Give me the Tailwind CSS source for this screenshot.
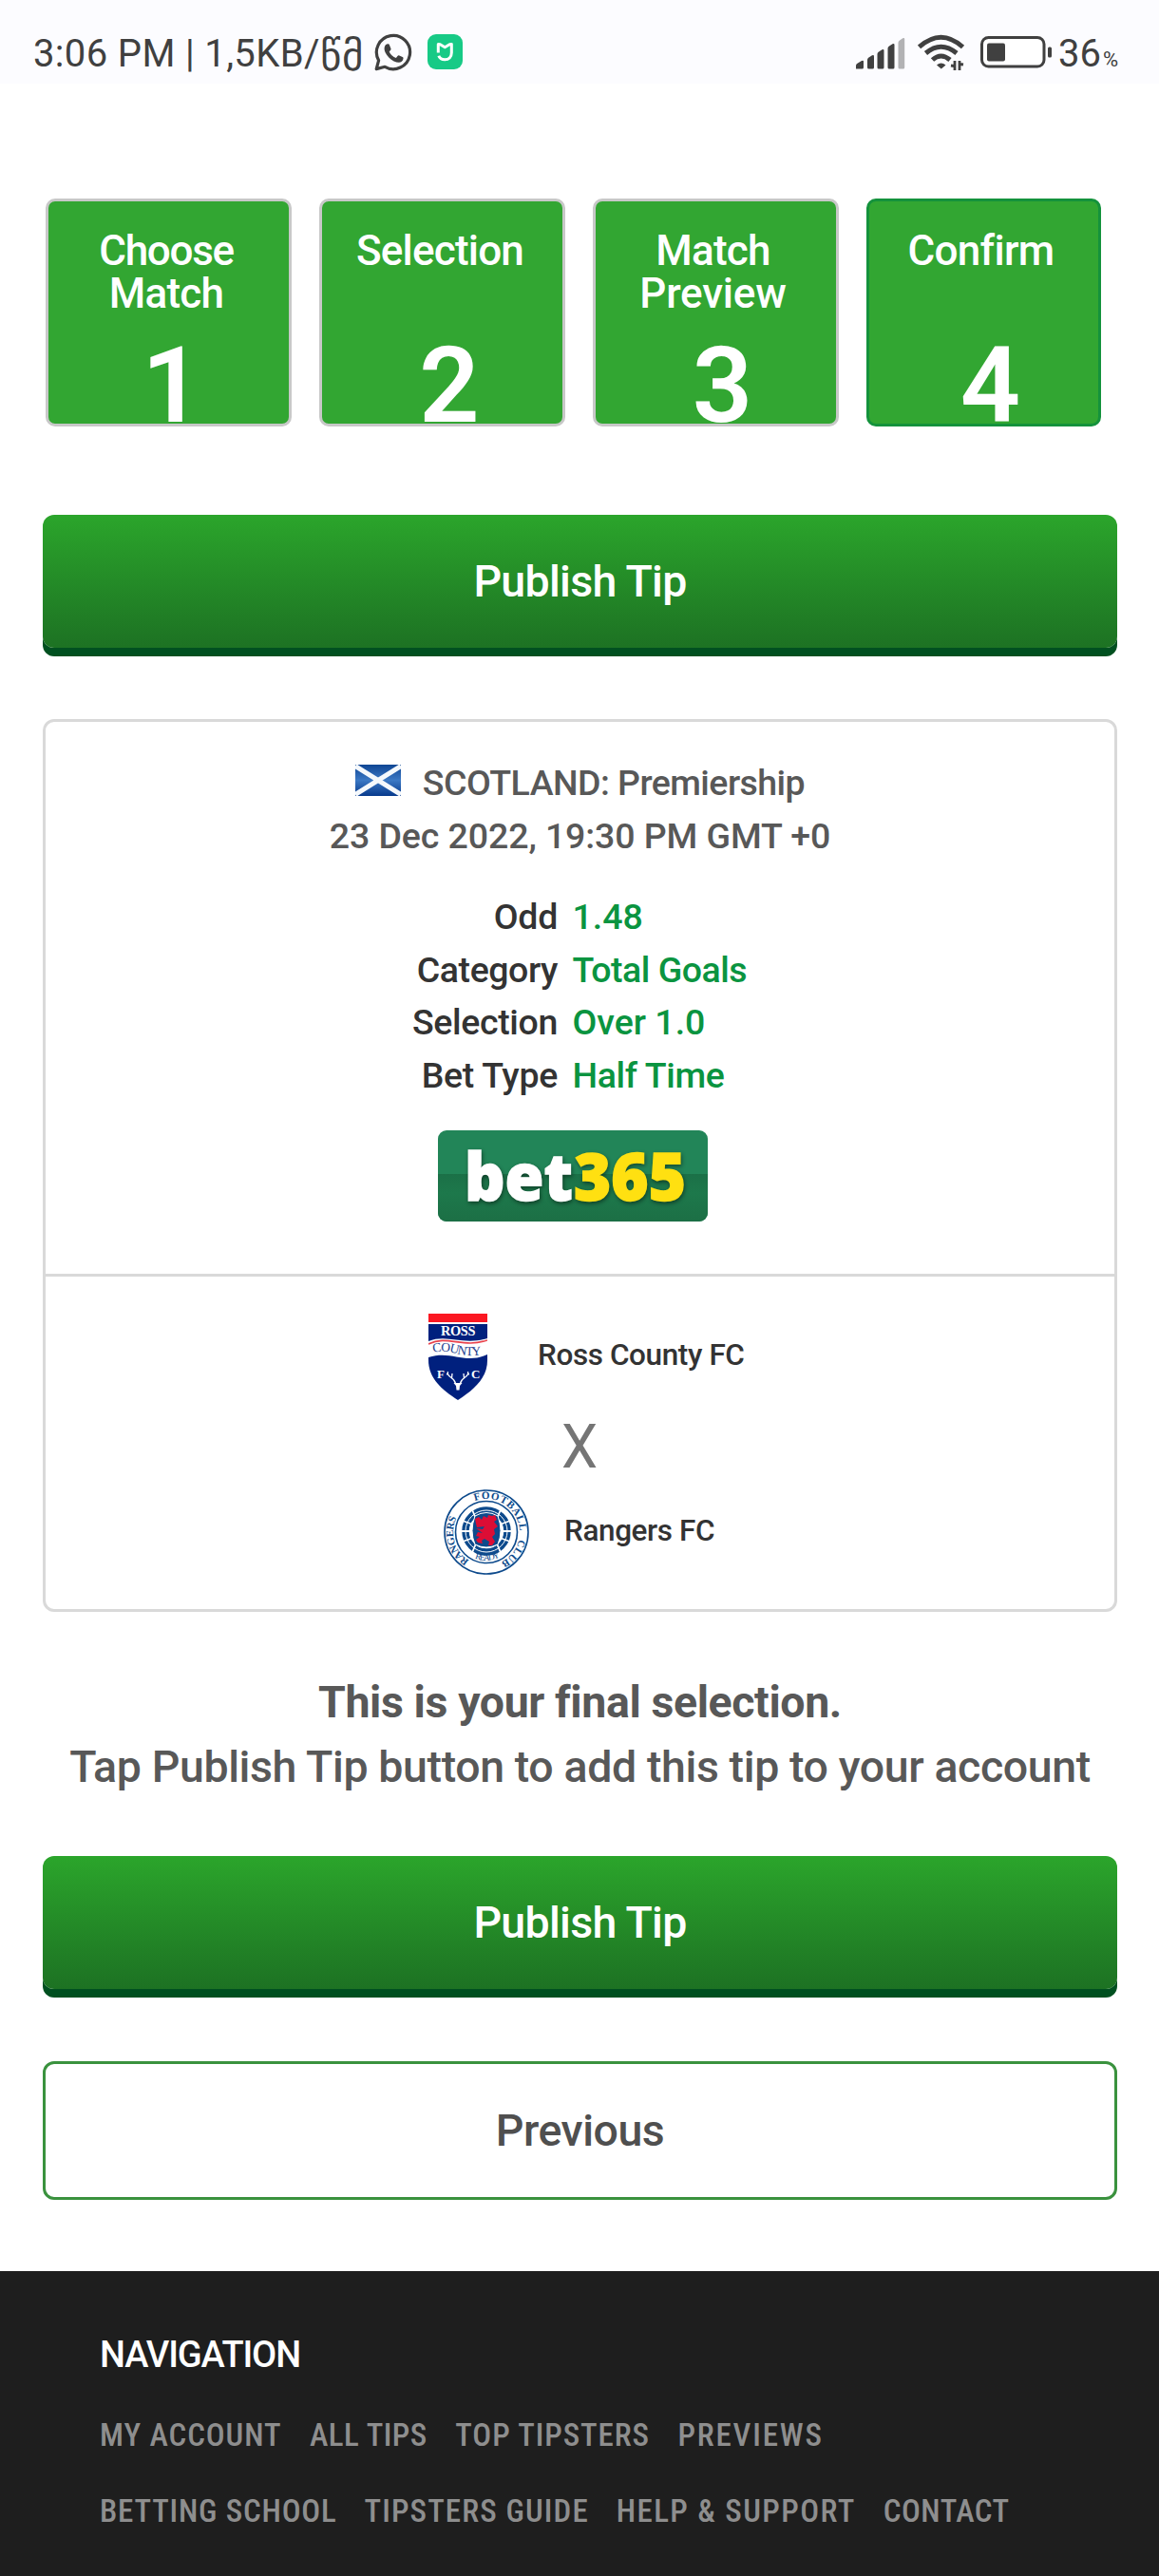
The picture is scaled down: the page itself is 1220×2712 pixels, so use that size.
<!DOCTYPE html>
<html lang="en">
  <head>
    <meta charset="UTF-8" />
    <meta name="viewport" content="width=device-width, initial-scale=1.0" />
    <script src="https://cdn.jsdelivr.net/npm/@tailwindcss/browser@4"></script>
    <title>Publish Tip</title>
  </head>
  <body class="min-h-screen flex flex-col bg-white font-['Roboto',sans-serif] font-medium text-[#585858] whitespace-nowrap overflow-x-hidden">
    <!-- Status bar -->
    <header class="h-[88px] shrink-0 bg-[#fcfcff] text-[#404040] font-normal flex items-start justify-between pl-[35px] pr-[43px]">
      <div class="flex items-start">
        <div class="flex text-[40px] leading-[60px] pt-[27px] w-[359px]">
          <span class="tracking-[0.350px]">3:06 PM | 1,5KB/</span>
          <span class="text-[43px] mt-0.5 tracking-[1px]">წმ</span>
        </div>
        <svg class="w-[40px] h-[40px] mt-[34.5px]" viewBox="0 0 40 40">
          <path d="M2.2 37.6 L4.6 28.6 A17.6 17.6 0 1 1 11.2 35.3 Z" fill="none" stroke="#404040" stroke-width="3.2" stroke-linejoin="round" />
          <path d="M10.8 14.5c.6-2 2-3.2 3.4-3.2 1 0 1.400.2 1.800 1.200l1.400 3.400c.3.8.1 1.200-.3 1.800l-1.400 1.700c1.600 3.200 4 5.200 7.200 6.600l1.800-2.200c.5-.6.9-.7 1.600-.4l3.400 1.700c.8.4.9.8.8 1.600-.3 2.400-2.500 4-4.600 4-3 0-7.500-2-10.600-5.300-3.200-3.300-5.400-7.600-4.500-10.900z" fill="#404040" />
        </svg>
        <svg class="w-[37px] h-[37px] mt-9 ml-4" viewBox="0 0 37 37">
          <rect width="37" height="37" rx="9" fill="#17ca86" />
          <path d="M11.300 19.500V10.500l2 .2 5 3 5-3 2-.2v9c0 4.500-3 7.300-7 7.300-3.400 0-5.600-1.500-6.500-4" fill="none" stroke="#fff" stroke-width="3" stroke-linejoin="round" />
        </svg>
      </div>
      <div class="flex items-start">
        <svg class="w-[52px] h-[34px] mt-[38.500px]" viewBox="0 0 52 34" fill="#404040">
          <path d="M0 33.500v-3.500q0-1.500 1.500-2.300l4.500-2.700q2-1 2 .8V32q0 1.500-1.500 1.500z" />
          <path d="M12 32v-8q0-1.500 1.200-2.300l3.800-2.500q2-.8 2 1V32q0 1.500-1.500 1.500h-4q-1.500 0-1.500-1.500z" />
          <path d="M22.500 32V18q0-1.500 1.200-2.200l3.800-2.500q2-.8 2 1V32q0 1.500-1.500 1.500h-4q-1.500 0-1.500-1.500z" />
          <path d="M33.500 32V12q0-1.500 1.200-2.200l3.800-2.500q2-.8 2 1V32q0 1.500-1.500 1.500h-4q-1.500 0-1.500-1.500z" />
          <path d="M44.500 32V6q0-1.500 1.200-2.200l3.500-2.500q2-.8 2 1V32q0 1.500-1.500 1.500h-3.700q-1.500 0-1.500-1.500z" fill="#b2b2b4" />
        </svg>
        <svg class="w-[50px] h-[40px] mt-[36px] ml-[13px]" viewBox="0 0 50 40" fill="none" stroke="#404040" stroke-width="5">
          <path d="M1.500 13.500Q24.500-7 47.500 13.500" />
          <path d="M8.500 20Q24.500 6.500 41 20" />
          <path d="M15.500 27Q24.500 19 34 27" />
          <path d="M20 32.500q4.500-4 9.500 0l-4.700 4z" fill="#404040" stroke="none" />
          <path d="M39 28v10M38 33.500l-3-.5M44 38V28M45 31.500l3 .5" stroke-width="2.800" />
        </svg>
        <svg class="w-[76px] h-[34px] mt-[37.500px] ml-[16px]" viewBox="0 0 76 34">
          <rect x="1.500" y="1.500" width="65.500" height="30.500" rx="7" fill="#fff" stroke="#404040" stroke-width="3" />
          <rect x="7" y="7.500" width="19" height="19" rx="2" fill="#404040" />
          <rect x="71" y="11.500" width="4" height="11" rx="1.500" fill="#404040" />
        </svg>
        <div class="text-[40px] leading-[60px] pt-[27px] ml-[6px]">36<span class="text-[22px] ml-0.5">%</span></div>
      </div>
    </header>

    <!-- Steps -->
    <section class="flex gap-[29px] mt-[121px] pl-12 text-white text-center">
      <div class="w-[259px] h-[240px] shrink-0 rounded-[10px] border-3 border-[#c8c8c8] bg-[#32a632] overflow-hidden pt-[30px] pr-[5px]">
        <div class="h-[90px] text-[44px] leading-[45px]"><span class="tracking-[-1.3px]">Choose</span><br /><span class="tracking-[-0.8px]">Match</span></div>
        <div class="mt-[18px] pl-3 text-[111px] leading-[113px] font-semibold">1</div>
      </div>
      <div class="w-[259px] h-[240px] shrink-0 rounded-[10px] border-3 border-[#c8c8c8] bg-[#32a632] overflow-hidden pt-[30px] pr-[5px]">
        <div class="h-[90px] text-[44px] leading-[45px] tracking-[-0.8px]">Selection</div>
        <div class="mt-[18px] pl-5 text-[111px] leading-[113px] font-semibold">2</div>
      </div>
      <div class="w-[259px] h-[240px] shrink-0 rounded-[10px] border-3 border-[#c8c8c8] bg-[#32a632] overflow-hidden pt-[30px] pr-[6px]">
        <div class="h-[90px] text-[44px] leading-[45px]"><span class="tracking-[-0.8px]">Match</span><br /><span class="tracking-[-0.2px]">Preview</span></div>
        <div class="mt-[18px] pl-5 text-[111px] leading-[113px] font-semibold">3</div>
      </div>
      <div class="w-[247px] h-[240px] shrink-0 rounded-[10px] border-3 border-[#14923c] bg-[#32a632] overflow-hidden pt-[30px] pr-[6px]">
        <div class="h-[90px] text-[44px] leading-[45px] tracking-[-0.7px]">Confirm</div>
        <div class="mt-[18px] pl-5 text-[111px] leading-[113px] font-semibold">4</div>
      </div>
    </section>

    <main class="flex flex-col pl-[45px] pr-11">
      <button class="h-[140px] mt-[93px] pt-0.5 rounded-xl bg-linear-to-b from-[#2ba52b] to-[#1d7223] shadow-[0_9px_0_#005020] text-white text-[46.500px] tracking-[-0.7px]">
        Publish Tip
      </button>

      <!-- Tip summary -->
      <div class="h-[940px] mt-[75px] rounded-xl border-3 border-[#d9d9d9]">
        <div class="h-[584px] pt-9 border-b-3 border-[#d9d9d9] text-[37.500px]">
          <div class="flex justify-center leading-[56px] tracking-[-0.560px]">
            <svg class="w-12 h-[33px] mt-[9px] mr-[23px]" viewBox="0 0 48 33">
              <defs>
                <linearGradient id="flag" x1="0" y1="0" x2="0" y2="1">
                  <stop offset="0" stop-color="#0f4694" />
                  <stop offset="0.5" stop-color="#3b78c4" />
                  <stop offset="1" stop-color="#073a8c" />
                </linearGradient>
              </defs>
              <rect width="48" height="33" fill="url(#flag)" />
              <path d="M0 1.500L48 31.500M48 1.500L0 31.500" stroke="#f4f8fc" stroke-width="5" />
            </svg>
            <span>SCOTLAND: Premiership</span>
          </div>
          <div class="text-center leading-[56px] tracking-[-0.1px]">23 Dec 2022, 19:30 PM GMT +0</div>
          <div class="grid grid-cols-[539px_1fr] gap-x-[15.500px] mt-[30px] leading-[55.700px] text-[#0a9440]">
            <div class="text-right text-[#333] tracking-[-0.3px]">Odd</div>
            <div>1.48</div>
            <div class="text-right text-[#333] tracking-[-0.450px]">Category</div>
            <div class="tracking-[-0.5px]">Total Goals</div>
            <div class="text-right text-[#333] tracking-[-0.350px]">Selection</div>
            <div>Over 1.0</div>
            <div class="text-right text-[#333] tracking-[-0.3px]">Bet Type</div>
            <div class="tracking-[-0.350px]">Half Time</div>
          </div>
          <svg class="w-[284px] h-24 mt-[29px] ml-[413px]" viewBox="0 0 284 96">
            <defs>
              <linearGradient id="logoBottom" x1="0" y1="0" x2="0" y2="1">
                <stop offset="0" stop-color="#1b7047" />
                <stop offset="0.4" stop-color="#1d784b" />
                <stop offset="1" stop-color="#1c6f45" />
              </linearGradient>
            </defs>
            <rect width="284" height="96" rx="9" fill="#228558" />
            <path d="M0 46H284V87a9 9 0 0 1-9 9H9a9 9 0 0 1-9-9z" fill="url(#logoBottom)" />
            <g font-family="Noto Sans, Open Sans, sans-serif" font-weight="900" font-size="69" class="drop-shadow-[1px_2px_2px_rgba(0,0,0,0.45)]">
              <text x="28" y="74" textLength="114" lengthAdjust="spacingAndGlyphs" fill="#fff" stroke="#fff" stroke-width="1.500">bet</text>
              <text x="143" y="74" textLength="118" lengthAdjust="spacingAndGlyphs" fill="#ffe011" stroke="#ffe011" stroke-width="1.500">365</text>
            </g>
          </svg>
        </div>

        <!-- Teams -->
        <div class="pt-[39px] text-[#333] text-[31.500px]">
          <div class="h-[91px] flex items-center pl-[403px] tracking-[-0.4px]">
            <svg class="w-[62px] h-[91px] mr-[53px]" viewBox="0 0 62 91">
              <defs>
                <path id="countyArc" d="M5 41Q16 38 29 42T60 42.500" />
              </defs>
              <rect width="62" height="9" fill="#fb1722" />
              <path d="M0 11H62V49C62 68 48 80 31 91C14 80 0 68 0 49z" fill="#00207e" />
              <path d="M0 29C20 21 36 34 62 26V43C38 54 24 38 0 46z" fill="#fff" />
              <path d="M0 32C20 22 36 37 62 28" fill="none" stroke="#e8424c" stroke-width="1.600" />
              <g font-family="Liberation Serif, serif" fill="#fff" font-weight="700">
                <text x="13" y="23" font-size="14.500" textLength="36" lengthAdjust="spacingAndGlyphs">ROSS</text>
                <text x="9" y="68" font-size="13">F</text>
                <text x="45" y="68" font-size="13">C</text>
                <text font-size="13.500" font-weight="400" fill="#26418f"><textPath href="#countyArc" textLength="51" lengthAdjust="spacing">COUNTY</textPath></text>
              </g>
              <path d="M28.500 73.500q-1-4-5-6.500t-3-6M21 64l-2-.5M24.500 68l.5-5M33.500 73.500q1-4 5-6.500t3-6M41 64l2-.5M37.500 68l-.5-5" fill="none" stroke="#fff" stroke-width="1.300" />
              <path d="M26.500 73h9l-2.500 3-.5 4.500h-3l-.5-4.500z" fill="#fff" />
            </svg>
            <span class="-mt-1">Ross County FC</span>
          </div>
          <div class="h-[94px] pt-1 text-center text-[64px] leading-[92px] text-[#757575] font-normal"><span class="inline-block scale-x-95">X</span></div>
          <div class="h-[90px] flex items-center pl-[419px] tracking-[-0.4px]">
            <svg class="w-[90px] h-[90px] mr-[37px]" viewBox="0 0 90 90">
              <defs>
                <path id="ringArc" d="M45 80A35 35 0 1 1 45.100 80" />
                <path id="readyArc" d="M30 71.500Q45 79 62 70" />
              </defs>
              <circle cx="45" cy="45" r="44" fill="#fff" stroke="#0d4a8c" stroke-width="1.600" />
              <circle cx="45" cy="45" r="32.500" fill="#fff" stroke="#0d4a8c" stroke-width="1.600" />
              <circle cx="45" cy="44" r="22" fill="none" stroke="#0d4a8c" stroke-width="7.500" />
              <circle cx="45" cy="44" r="22" fill="none" stroke="#fff" stroke-width="1" />
              <path d="M17 32l14 5M17 44h14M17 56l14-5M73 32l-14 5M73 44H59M73 56l-14-5M29 19l5 12M61 19l-5 12M29 69l5-12M61 69l-5-12" stroke="#fff" stroke-width="1.800" />
              <path d="M33 28Q45 21 57 28Q63 44 57 58Q45 64 33 58Q27 44 33 28z" fill="#0d4a8c" stroke="#fff" stroke-width="1" />
              <path d="M33 31l4-2 3 3 2-4 4 2 1-3 4 1 3-1 2 5-3 2 4 5-4 3 1 5-3 3 3 5-3 4h-4l1-4-5-3-3 2 1 3-5-1-2-3 4-3-4-1 2-4 5 1-7-5 7 1 2-3-8 1-1-4z" fill="#dc0d35" />
              <g font-family="Liberation Serif, serif" fill="#0d4a8c" font-weight="700">
                <text font-size="11"><textPath href="#ringArc" startOffset="19" textLength="51">RANGERS</textPath></text>
                <text font-size="11"><textPath href="#ringArc" startOffset="97" textLength="66">FOOTBALL</textPath></text>
                <text font-size="11"><textPath href="#ringArc" startOffset="172" textLength="31">CLUB</textPath></text>
                <text font-size="9.500" font-weight="400"><textPath href="#readyArc" startOffset="3" textLength="27">READY</textPath></text>
              </g>
            </svg>
            <span class="-mt-0.5">Rangers FC</span>
          </div>
        </div>
      </div>

      <div class="mt-[61px] text-center text-[46.500px] leading-[68px]">
        <div class="font-bold tracking-[-0.4px]">This is your final selection.</div>
        <div class="tracking-[-0.4px]">Tap Publish Tip button to add this tip to your account</div>
      </div>

      <button class="h-[140px] mt-[60px] pt-0.5 rounded-xl bg-linear-to-b from-[#2ba52b] to-[#1d7223] shadow-[0_9px_0_#005020] text-white text-[46.500px] tracking-[-0.7px]">
        Publish Tip
      </button>
      <button class="h-[146px] mt-[76px] pt-0.5 rounded-xl border-3 border-[#3a923e] text-[#4f4f4f] text-[46.500px] tracking-[-0.5px]">
        Previous
      </button>
    </main>

    <!-- Footer -->
    <footer class="flex-1 mt-[75px] pt-16 pl-[105px] bg-[#1e1e1e]">
      <h3 class="text-white text-[38px] leading-12 tracking-[-1.100px]">NAVIGATION</h3>
      <nav class="mt-[21px] text-[33px] leading-[80px] text-[#8e8e8e] font-stretch-semi-condensed">
        <div class="flex gap-[29.500px]">
          <a class="tracking-[0.9px]">MY ACCOUNT</a>
          <a class="tracking-[0.5px]">ALL TIPS</a>
          <a class="tracking-[0.9px]">TOP TIPSTERS</a>
          <a class="tracking-[1.8px]">PREVIEWS</a>
        </div>
        <div class="flex gap-[29px]">
          <a class="tracking-[0.8px]">BETTING SCHOOL</a>
          <a class="tracking-[1.100px]">TIPSTERS GUIDE</a>
          <a class="tracking-[1.400px]">HELP &amp; SUPPORT</a>
          <a class="tracking-[0.5px]">CONTACT</a>
        </div>
      </nav>
    </footer>
  </body>
</html>
